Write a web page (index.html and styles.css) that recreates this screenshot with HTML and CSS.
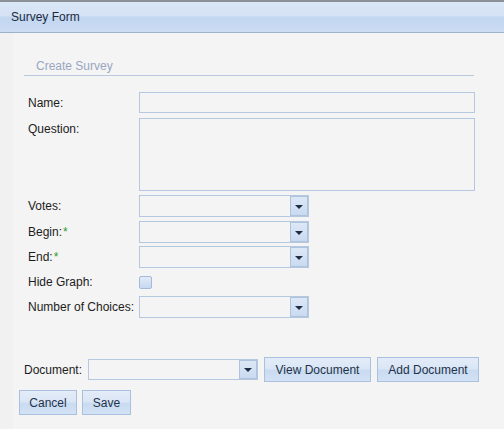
FILE: index.html
```html
<!DOCTYPE html>
<html>
<head>
<meta charset="utf-8">
<link rel="stylesheet" href="styles.css">
</head>
<body>
<div class="window">
  <div class="header">Survey Form</div>
  <div class="main">
    <div class="legend">Create Survey</div>
    <div class="form">
      <div class="row"><span class="label">Name:</span><div class="input text"></div></div>
      <div class="row"><span class="label">Question:</span><div class="input area"></div></div>
      <div class="row"><span class="label">Votes:</span><div class="combo"><span class="trigger"><span class="arrow"></span></span></div></div>
      <div class="row"><span class="label">Begin:<span class="req">*</span></span><div class="combo"><span class="trigger"><span class="arrow"></span></span></div></div>
      <div class="row"><span class="label">End:<span class="req">*</span></span><div class="combo"><span class="trigger"><span class="arrow"></span></span></div></div>
      <div class="row check-row"><span class="label">Hide Graph:</span><span class="checkbox"></span></div>
      <div class="row"><span class="label">Number of Choices:</span><div class="combo"><span class="trigger"><span class="arrow"></span></span></div></div>
    </div>
    <div class="doc-row">
      <span class="doc-label">Document:</span>
      <div class="combo"><span class="trigger"><span class="arrow"></span></span></div>
      <button class="btn view">View Document</button>
      <button class="btn add">Add Document</button>
    </div>
    <div class="actions">
      <button class="btn cancel">Cancel</button>
      <button class="btn save">Save</button>
    </div>
  </div>
</div>
</body>
</html>
```

FILE: styles.css
```css
html, body {
  margin: 0;
  padding: 0;
  background: #f4f4f4;
}
body {
  font-family: "Liberation Sans", Arial, sans-serif;
  font-size: 12px;
  color: #1c1c1c;
}
.window {
  width: 504px;
  height: 429px;
  border-top: 2px solid #8c9098;
  box-sizing: border-box;
  background: linear-gradient(to right, #f1f1f1 13px, #f4f4f4 13px);
}
.header {
  height: 30px;
  line-height: 30px;
  padding-left: 11px;
  border-bottom: 1px solid #9fb1ca;
  color: #1b2940;
  background: linear-gradient(#dbe7f7 0%, #d4e2f5 45%, #c2d6f1 52%, #cbdcf3 100%);
}
.legend {
  margin: 26px 0 0 24px;
  width: 438px;
  height: 16px;
  line-height: 14px;
  padding-left: 12px;
  color: #97a7c1;
  border-bottom: 1px solid #b9c9de;
}
.form {
  margin: 16px 0 0 28px;
  display: flex;
  flex-direction: column;
}
.row {
  display: flex;
  align-items: flex-start;
  margin-bottom: 4px;
}
.row:nth-child(4), .row:nth-child(5), .row:nth-child(6) {
  margin-bottom: 3px;
}
.label {
  width: 111px;
  flex: none;
  line-height: 22px;
}
.req {
  color: #2f9a2f;
  margin-left: 1px;
}
.input {
  box-sizing: border-box;
  border: 1px solid #b6c8df;
  background: #f4f4f4;
}
.text {
  width: 336px;
  height: 21px;
}
.area {
  width: 336px;
  height: 73px;
}
.combo {
  box-sizing: border-box;
  width: 170px;
  height: 22px;
  border: 1px solid #b6c8df;
  background: #f4f4f4;
  display: flex;
  justify-content: flex-end;
  flex: none;
}
.trigger {
  box-sizing: border-box;
  width: 18px;
  height: 20px;
  border: 1px solid #aec3de;
  background: linear-gradient(#dde8f6, #c9daf0);
  display: flex;
  align-items: center;
  justify-content: center;
}
.arrow {
  width: 0;
  height: 0;
  border-left: 4px solid transparent;
  border-right: 4px solid transparent;
  border-top: 4px solid #1f2e47;
  margin-top: 1px;
}
.check-row {
  height: 22px;
  align-items: center;
}
.checkbox {
  box-sizing: border-box;
  width: 13px;
  height: 13px;
  border: 1px solid #a3badb;
  border-radius: 2px;
  background: linear-gradient(#e2ebf8, #c6d8f0);
}
.doc-row {
  margin: 35px 0 0 24px;
  display: flex;
  align-items: center;
  gap: 6px;
}
.doc-label {
  width: 58px;
  flex: none;
}
.doc-row .combo {
  height: 21px;
}
.doc-row .trigger {
  height: 19px;
}
.btn {
  box-sizing: border-box;
  height: 25px;
  padding: 0;
  white-space: nowrap;
  border: 1px solid #a9c1df;
  background: linear-gradient(#e3ecf8 0%, #dbe6f6 45%, #c9dbf1 55%, #d3e2f5 100%);
  color: #23324a;
  font-family: "Liberation Sans", Arial, sans-serif;
  font-size: 12px;
  border-radius: 0;
  flex: none;
  cursor: pointer;
}
.view { width: 107px; }
.add { width: 102px; }
.actions {
  margin: 8px 0 0 19px;
  display: flex;
  gap: 5px;
}
.cancel { width: 58px; }
.save { width: 49px; }
```
